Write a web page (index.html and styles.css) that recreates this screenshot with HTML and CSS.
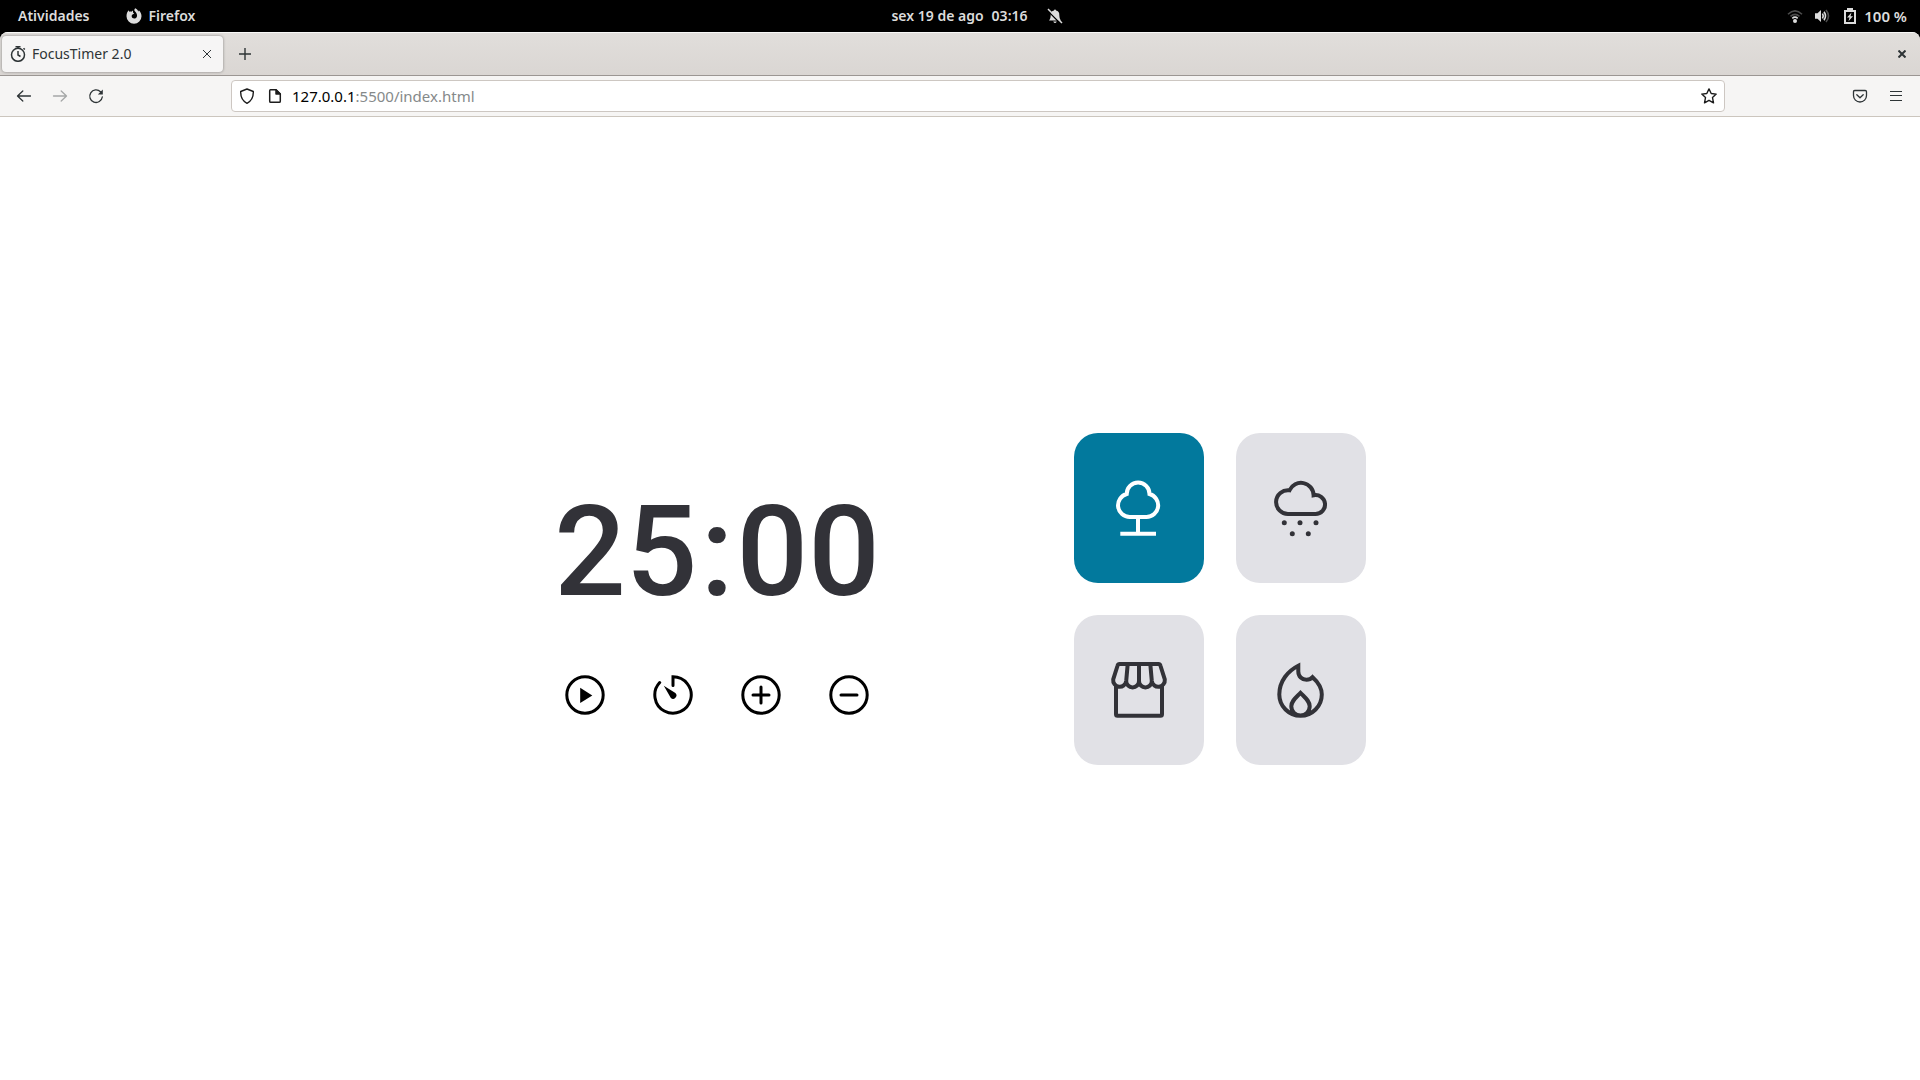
FILE: index.html
```html
<!DOCTYPE html>
<html lang="pt-BR">
<head>
<meta charset="utf-8">
<meta name="viewport" content="width=device-width, initial-scale=1">
<title>FocusTimer 2.0</title>
<link rel="stylesheet" href="styles.css">
</head>
<body>
<header class="panel">
  <div class="panel-left">
    <button class="panel-item" type="button">Atividades</button>
    <button class="panel-item" type="button">
      <svg class="icon" width="16" height="16" viewBox="0 0 16 16"><path d="M9.3.2C11 1.2 12 2.3 12.3 3.5C12.7 3.3 12.8 2.8 12.8 2.3C14.5 3.8 15.5 6 15.5 8.3A7.5 7.5 0 0 1 .5 8.3C.5 5.8 1.3 3.5 2.7 2.2L3.2 3.7C4 3.5 4.7 3.5 5.3 3.7L7 2.4V4.5L8.2 5.5L6.5 6.5C5 7.3 5.5 10.5 8.2 10.5C10.5 10.5 11.6 8.3 10.8 6.2C10.4 4.5 8.8 3.5 8.4 2.5C8.2 1.6 8.6.8 9.3.2Z" fill="currentColor"/></svg>
      Firefox
    </button>
  </div>
  <button class="panel-item panel-clock" type="button">
    <span>sex 19 de ago</span><span>03:16</span>
    <svg class="icon bell" width="16" height="16" viewBox="0 0 16 16"><path d="M2 12.5C3.5 11 3.5 9 3.7 7A4.3 4.3 0 0 1 7 2.6A1 1 0 0 1 9 2.6A4.3 4.3 0 0 1 12.3 7C12.5 9 12.5 11 14 12.5ZM6.2 13.5H9.8Q9 15 8 15T6.2 13.5Z" fill="currentColor"/><path d="M.2 2.2L13.8 15.8" stroke="#000" stroke-width="1.5"/><path d="M1 1L15 15" stroke="currentColor" stroke-width="1.5"/></svg>
  </button>
  <button class="panel-item panel-status" type="button" aria-label="Sistema">
    <svg class="icon" width="16" height="16" viewBox="0 0 16 16" fill="none" stroke="currentColor" stroke-width="1.6"><path d="M1 6.2Q8-.6 15 6.2M3.5 8.4Q8 4.4 12.5 8.4" opacity=".35"/><path d="M5.3 10.3Q8 8 10.7 10.3"/><circle cx="8" cy="13" r="2" fill="currentColor" stroke="none"/></svg>
    <svg class="icon speaker" width="16" height="16" viewBox="0 0 16 16" fill="none" stroke="currentColor" stroke-width="1.6"><path d="M1 5.2H3.5L7 2V14L3.5 10.8H1Z" fill="currentColor" stroke="none"/><path d="M8.5 5.5Q10 8 8.5 10.5M10 3.8Q13 8 10 12.2"/><path d="M12 2Q17 8 12 14" opacity=".35"/></svg>
    <svg class="icon" width="16" height="16" viewBox="0 0 16 16"><path d="M5 0H11V2H14V16H2V2H5ZM4 4V14H12V4Z" fill="currentColor" fill-rule="evenodd"/><path d="M9.5 4.5L5 9.5H7.5L6.5 13.3L11 8.2H8.5Z" fill="currentColor"/></svg>
    <span class="battery">100 %</span>
  </button>
</header>

<div class="window">
  <div class="tabbar">
    <div class="tab">
      <svg class="icon" width="16" height="16" viewBox="0 0 16 16" fill="none" stroke="currentColor" stroke-width="1.5"><circle cx="8" cy="8.8" r="6.5"/><path d="M8 5V9L10.5 10.5M5.5.8H10.5M8 .8V2.2M13.5 2.2L14.8 3.5"/></svg>
      <span class="tab-title">FocusTimer 2.0</span>
      <button class="icon-button tab-close" type="button" aria-label="Fechar aba"><svg width="8" height="8" viewBox="0 0 8 8" fill="none" stroke="currentColor"><path d="M0 0L8 8M8 0L0 8"/></svg></button>
    </div>
    <button class="icon-button" type="button" aria-label="Nova aba"><svg width="12" height="12" viewBox="0 0 12 12" fill="none" stroke="currentColor" stroke-width="1.4"><path d="M6 0V12M0 6H12"/></svg></button>
    <button class="icon-button window-close" type="button" aria-label="Fechar janela"><svg width="8" height="8" viewBox="0 0 8 8" fill="none" stroke="currentColor" stroke-width="2"><path d="M.5.5L7.5 7.5M7.5.5L.5 7.5"/></svg></button>
  </div>

  <nav class="toolbar" aria-label="Navegação">
    <div class="toolbar-nav">
      <button class="icon-button" type="button" aria-label="Voltar"><svg width="16" height="16" viewBox="0 0 16 16" fill="none" stroke="currentColor" stroke-width="1.3" stroke-linecap="round" stroke-linejoin="round"><path d="M14.5 8H1.8M6.8 3L1.5 8L6.8 13"/></svg></button>
      <button class="icon-button" type="button" aria-label="Avançar" disabled><svg width="16" height="16" viewBox="0 0 16 16" fill="none" stroke="currentColor" stroke-width="1.3" stroke-linecap="round" stroke-linejoin="round"><path d="M1.5 8H14.2M9.2 3L14.5 8L9.2 13"/></svg></button>
      <button class="icon-button" type="button" aria-label="Recarregar"><svg width="16" height="16" viewBox="0 0 16 16" fill="none" stroke="currentColor" stroke-width="1.3" stroke-linecap="round"><path d="M12.5 3.7A6.3 6.3 0 1 0 14.3 9"/><path d="M14.8 1.5V6.5H9.8Z" fill="currentColor" stroke="none"/></svg></button>
    </div>
    <div class="urlbar">
      <svg class="icon" width="16" height="16" viewBox="0 0 16 16" fill="none" stroke="currentColor" stroke-width="1.4" stroke-linejoin="round"><path d="M8 1L14.3 3.5C14.5 8.5 12.5 13 8 15.3C3.5 13 1.5 8.5 1.7 3.5Z"/></svg>
      <svg class="icon" width="16" height="16" viewBox="0 0 16 16" fill="none" stroke="currentColor" stroke-width="1.5" stroke-linejoin="round"><path d="M3.5 1.7H9L13.3 6V13.2Q13.3 14.3 12.2 14.3H3.7Q2.7 14.3 2.7 13.2V2.7Q2.7 1.7 3.5 1.7Z"/><path d="M9 1.7V6H13.3Z" fill="currentColor"/></svg>
      <a class="url" href="http://127.0.0.1:5500/index.html"><span class="url-host">127.0.0.1</span>:5500/index.html</a>
      <button class="icon-button star" type="button" aria-label="Adicionar aos favoritos"><svg width="16" height="16" viewBox="0 0 16 16" fill="none" stroke="currentColor" stroke-width="1.4" stroke-linejoin="round"><path d="M8 .9L10.2 5.5L15.2 6.1L11.5 9.6L12.5 14.8L8 12.3L3.5 14.8L4.5 9.6L.8 6.1L5.8 5.5Z"/></svg></button>
    </div>
    <div class="toolbar-end">
      <button class="icon-button" type="button" aria-label="Pocket"><svg width="16" height="16" viewBox="0 0 16 16" fill="none" stroke="currentColor" stroke-width="1.3" stroke-linecap="round" stroke-linejoin="round"><path d="M2.8 2.5H13.2Q14.5 2.5 14.5 3.8V7.5A6.5 6.5 0 0 1 1.5 7.5V3.8Q1.5 2.5 2.8 2.5ZM4.8 6.7L8 9.8L11.2 6.7"/></svg></button>
      <button class="icon-button" type="button" aria-label="Menu"><svg width="16" height="16" viewBox="0 0 16 16" stroke="currentColor"><path d="M2 3.5H14M2 7.5H14M2 12.5H14"/></svg></button>
    </div>
  </nav>

  <main class="page">
    <section class="timer" aria-label="Timer">
      <div class="display"><span>25</span><span>:</span><span>00</span></div>
      <div class="controls">
        <button class="control" type="button" aria-label="Iniciar"><svg viewBox="0 0 40 40"><circle cx="20" cy="20" r="18.2"/><path class="solid" d="M15.2 12.8V28L27.3 20.4Z"/></svg></button>
        <button class="control" type="button" aria-label="Definir tempo"><svg viewBox="0 0 40 40"><path d="M20 10.5V1.8A18.2 18.2 0 1 1 6.7 7.6"/><path class="solid" d="M10.8 10.8L22.4 18A3.3 3.3 0 1 1 17.7 22.7Z"/></svg></button>
        <button class="control" type="button" aria-label="Mais cinco minutos"><svg viewBox="0 0 40 40"><circle cx="20" cy="20" r="18.2"/><path d="M20 12V28M12 20H28"/></svg></button>
        <button class="control" type="button" aria-label="Menos cinco minutos"><svg viewBox="0 0 40 40"><circle cx="20" cy="20" r="18.2"/><path d="M12 20H28"/></svg></button>
      </div>
    </section>
    <section class="sounds" aria-label="Sons">
      <button class="sound active" type="button" aria-label="Floresta" aria-pressed="true"><svg viewBox="0 0 64 64"><path d="M19.7 18A11.4 11.4 0 1 1 42.5 18A11.7 11.7 0 0 1 39.5 41H22.7A11.7 11.7 0 0 1 19.7 18ZM31 41V57.7M13.3 57.7H49"/></svg></button>
      <button class="sound" type="button" aria-label="Chuva" aria-pressed="false"><svg viewBox="0 0 64 64"><path d="M20.5 14.3A12.6 12.6 0 0 1 44.6 19.2A9.5 9.5 0 1 1 46.5 38H19.3A11.9 11.9 0 1 1 20.5 14.3Z"/><g class="solid"><circle cx="15.3" cy="46.7" r="2.5"/><circle cx="31" cy="46.7" r="2.5"/><circle cx="47" cy="46.7" r="2.5"/><circle cx="23.3" cy="57.7" r="2.5"/><circle cx="39.3" cy="57.7" r="2.5"/></g></svg></button>
      <button class="sound" type="button" aria-label="Cafeteria" aria-pressed="false"><svg viewBox="0 0 64 64"><path d="M9 28V56.2Q9 57.7 10.5 57.7H53.5Q55 57.7 55 56.2V28M12.5 6H51.5Q53 6 53.4 7.5L57.8 21.5A6.5 6.5 0 0 1 44.8 23A6.4 6.4 0 0 1 32 23A6.4 6.4 0 0 1 19.2 23A6.5 6.5 0 0 1 6.2 21.5L10.6 7.5Q11 6 12.5 6ZM20.7 6L19.2 23M32 6V23M43.3 6L44.8 23"/></svg></button>
      <button class="sound" type="button" aria-label="Lareira" aria-pressed="false"><svg viewBox="0 0 64 64"><path d="M29.3 7.8V13.5C29.3 18.5 33 21.8 37.5 21.8C40 21.8 42 21 43.6 19.2C49.5 24.5 52.8 30.5 52.8 36.5A21.2 21.2 0 0 1 10.3 36.5C10.3 23 19 13 29.3 7.8ZM31.5 34.8C27 39.5 22.3 43 22.3 48.3A9.2 9.2 0 0 0 40.7 48.3C40.7 43 36 39.5 31.5 34.8Z"/></svg></button>
    </section>
  </main>
</div>
</body>
</html>
```
FILE: styles.css
```css
* {
  box-sizing: border-box;
}

body {
  margin: 0;
  min-height: 100vh;
  display: flex;
  flex-direction: column;
  background: #000;
  color: #2e3436;
  font-family: "Noto Sans", "Open Sans", sans-serif;
  font-size: 14px;
  line-height: 20px;
}

button {
  padding: 0;
  border: 0;
  background: none;
  color: inherit;
  font: inherit;
}

svg {
  display: block;
  flex: none;
}

/* Desktop panel */
.panel {
  display: grid;
  grid-template-columns: 1fr auto 1fr;
  align-items: center;
  height: 32px;
  padding: 0 13px 0 18px;
  color: #dcdcdc;
  font-weight: 600;
}

.panel-left {
  display: flex;
  gap: 37px;
}

.panel-item {
  display: flex;
  align-items: center;
  gap: 6px;
}

.panel-clock {
  gap: 8px;
  padding-left: 29px;
}

.bell {
  margin-left: 11px;
}

.panel-status {
  justify-self: end;
}

.speaker {
  margin: 0 6px 0 5px;
}

.battery {
  font-size: 15px;
}

/* Browser window */
.window {
  flex: 1;
  display: flex;
  flex-direction: column;
  overflow: hidden;
  border-radius: 8px 8px 0 0;
  background: #fff;
}

.tabbar {
  display: flex;
  align-items: center;
  gap: 9px;
  height: 44px;
  padding: 0 5px 0 2px;
  border-top: 1px solid #f8f8f7;
  border-bottom: 1px solid #9b9693;
  background: linear-gradient(#e1dedb, #dad6d3);
}

.tab {
  display: flex;
  align-items: center;
  gap: 6px;
  width: 221px;
  height: 36px;
  padding: 0 4px 0 8px;
  border-radius: 4px;
  background: #f6f5f5;
  box-shadow: 0 0 3px #00000066;
}

.tab-title {
  flex: 1;
}

.icon-button {
  display: flex;
  align-items: center;
  justify-content: center;
  width: 26px;
  height: 28px;
}

.tab-close {
  width: 24px;
}

.window-close {
  margin-left: auto;
}

.toolbar {
  display: flex;
  align-items: center;
  height: 41px;
  padding: 0 11px;
  border-bottom: 1px solid #ccc6be;
  background: #f6f5f4;
}

.toolbar-nav,
.toolbar-end {
  display: flex;
  gap: 10px;
}

.toolbar-nav {
  width: 220px;
}

.toolbar-end {
  width: 184px;
  justify-content: flex-end;
}

.icon-button:disabled {
  opacity: .4;
}

.urlbar {
  flex: 1;
  display: flex;
  align-items: center;
  gap: 12px;
  height: 32px;
  padding: 0 2px 0 7px;
  border: 1px solid #cdc7c2;
  border-radius: 4px;
  background: #fff;
  color: #1c1c1c;
}

.url {
  flex: 1;
  margin-left: -3px;
  color: #85898a;
  font-size: 15px;
  text-decoration: none;
}

.url-host {
  color: #000;
}

/* FocusTimer page */
.page {
  flex: 1;
  display: flex;
  align-items: center;
  justify-content: center;
  gap: 194px;
}

.timer {
  padding-bottom: 6px;
}

.display {
  display: flex;
  gap: 3px;
  color: #323238;
  font-family: Roboto, sans-serif;
  font-size: 126px;
  font-weight: 500;
  line-height: 150px;
}

.controls {
  display: flex;
  justify-content: center;
  gap: 48px;
  margin-top: 48px;
}

.control {
  width: 40px;
  height: 40px;
  color: #000;
}

.control svg,
.sound svg {
  fill: none;
  stroke: currentColor;
  stroke-width: 3;
  stroke-linecap: round;
}

.control .solid,
.sound .solid {
  fill: currentColor;
  stroke: none;
}

.sounds {
  display: grid;
  grid-template-columns: 130px 130px;
  gap: 32px;
}

.sound {
  display: flex;
  align-items: center;
  justify-content: center;
  height: 150px;
  border-radius: 24px;
  background: #e1e1e6;
  color: #323238;
}

.sound svg {
  width: 64px;
  height: 64px;
  stroke-width: 4;
  stroke-linecap: butt;
}

.active {
  background: #02799d;
  color: #fff;
}
```
